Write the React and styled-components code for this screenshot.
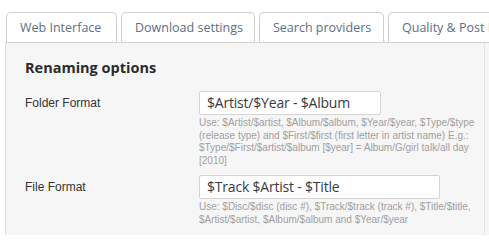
import React from 'react';
import styled, { createGlobalStyle } from 'styled-components';

const Global = createGlobalStyle`
  body {
    margin: 0;
    background: #fff;
    font-family: "Open Sans", "Liberation Sans", sans-serif;
  }
`;

const Page = styled.div`
  width: 489px;
  height: 235px;
  overflow: hidden;
`;

const TabBar = styled.div`
  display: flex;
  gap: 4px;
  padding: 12px 0 0 6px;
  white-space: nowrap;
`;

const Tab = styled.div`
  flex: none;
  width: ${p => p.w}px;
  height: 30px;
  box-sizing: border-box;
  border: 1px solid #cfcfcf;
  border-bottom: none;
  border-radius: 5px 5px 0 0;
  background: #fff;
  color: #5d6f86;
  font-size: 12.5px;
  line-height: 30px;
  padding-left: 13px;
`;

const Panel = styled.div`
  margin-left: 5px;
  border-top: 1px solid #d3d3d3;
  border-left: 1px solid #dedede;
  background: #f6f6f6;
  padding-right: 4px;
  height: 200px;
`;

const Content = styled.div`
  border-right: 1px solid #e6e6e6;
  height: 100%;
  padding: 15px 0 0 19px;
  box-sizing: border-box;
`;

const Heading = styled.h2`
  margin: 0 0 13px;
  font-size: 14.5px;
  line-height: 20px;
  font-weight: 700;
  color: #2b2b2b;
`;

const Row = styled.div`
  display: flex;
  align-items: flex-start;
  margin-bottom: ${p => p.mb || 0}px;
`;

const Label = styled.div`
  width: 174px;
  flex: none;
  font-family: "Liberation Sans", Arial, sans-serif;
  font-size: 12px;
  color: #333;
  line-height: 25px;
`;

const Field = styled.div`
  display: flex;
  flex-direction: column;
`;

const Input = styled.div`
  width: ${p => p.w}px;
  height: 24px;
  box-sizing: border-box;
  border: 1px solid #d4d4d4;
  border-radius: 2px;
  background: #fff;
  padding-left: 7px;
  font-family: "Open Sans", sans-serif;
  font-size: 14px;
  letter-spacing: -0.2px;
  line-height: 22px;
  color: #3a3a3a;
`;

const Help = styled.div`
  margin-top: 2px;
  font-family: "Liberation Sans", Arial, sans-serif;
  font-size: 10px;
  line-height: 12.5px;
  color: #a0a0a0;
  white-space: nowrap;
  span { display: block; }
`;

const tabs = [
  ['Web Interface', 111],
  ['Download settings', 134],
  ['Search providers', 125],
  ['Quality & Post Processing', 200],
];

export default function App() {
  return (
    <Page>
      <Global />
      <TabBar>
        {tabs.map(([t, w]) => <Tab key={t} w={w}>{t}</Tab>)}
      </TabBar>
      <Panel>
        <Content>
          <Heading>Renaming options</Heading>
          <Row mb={8}>
            <Label>Folder Format</Label>
            <Field>
              <Input w={182}>$Artist/$Year - $Album</Input>
              <Help>
                <span>Use: $Artist/$artist, $Album/$album, $Year/$year, $Type/$type</span>
                <span>(release type) and $First/$first (first letter in artist name) E.g.:</span>
                <span>$Type/$First/$artist/$album [$year] = Album/G/girl talk/all day</span>
                <span>[2010]</span>
              </Help>
            </Field>
          </Row>
          <Row>
            <Label>File Format</Label>
            <Field>
              <Input w={241}>$Track $Artist - $Title</Input>
              <Help>
                <span>Use: $Disc/$disc (disc #), $Track/$track (track #), $Title/$title,</span>
                <span>$Artist/$artist, $Album/$album and $Year/$year</span>
              </Help>
            </Field>
          </Row>
        </Content>
      </Panel>
    </Page>
  );
}
